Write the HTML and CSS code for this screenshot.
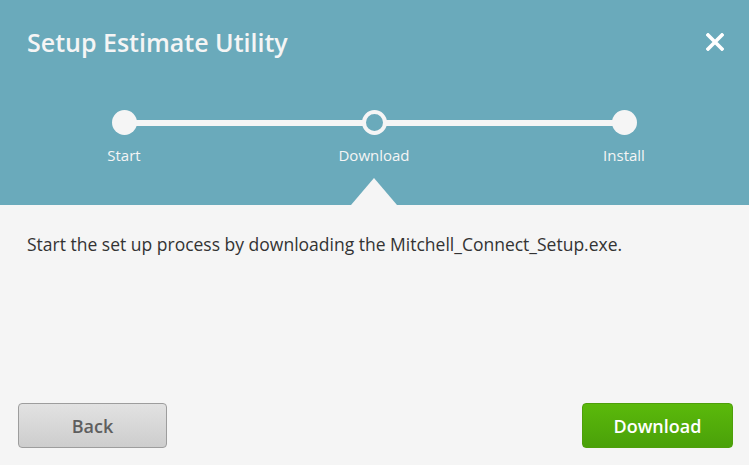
FILE: index.html
```html
<!DOCTYPE html>
<html lang="en">
<head>
  <meta charset="UTF-8" />
  <meta name="viewport" content="width=device-width, initial-scale=1.0"/>
  <title>Setup Estimate Utility</title>
  <link rel="stylesheet" href="styles.css">
</head>
<body>

  <div class="dialog">
    <div class="header">
      <div class="title-row">
        <h2>Setup Estimate Utility</h2>
        <button class="close" title="Close">
          <svg width="18" height="18" viewBox="0 0 18 18">
            <path d="M2 2 L16 16 M16 2 L2 16" stroke="#ffffff" stroke-width="3.6" stroke-linecap="square" />
          </svg>
        </button>
      </div>

      <div class="steps">
        <div class="step done">
          <span class="dot"></span>
          <span class="label">Start</span>
        </div>
        <div class="step current">
          <span class="dot"></span>
          <span class="label">Download</span>
          <span class="pointer"></span>
        </div>
        <div class="step">
          <span class="dot"></span>
          <span class="label">Install</span>
        </div>
      </div>
    </div>

    <div class="content">
      <p>Start the set up process by downloading the Mitchell_Connect_Setup.exe.</p>

      <div class="actions">
        <button class="btn back">Back</button>
        <button class="btn primary">Download</button>
      </div>
    </div>
  </div>

</body>
</html>
```

FILE: styles.css
```css
body {
  margin: 0;
  background: #ffffff;
  font-family: "Open Sans", Arial, sans-serif;
}
.dialog {
  width: 749px;
  height: 465px;
  display: flex;
  flex-direction: column;
  background: #f5f5f5;
}
.header {
  height: 205px;
  box-sizing: border-box;
  padding-top: 26px;
  background: #6aaabb;
  color: #f5f5f5;
}
.title-row {
  display: flex;
  justify-content: space-between;
  align-items: center;
  padding: 0 25px 0 27px;
}
h2 {
  margin: 0;
  font-size: 25px;
  line-height: 32px;
  font-weight: 600;
}
.close {
  border: 0;
  padding: 0;
  background: none;
  width: 18px;
  height: 18px;
  cursor: pointer;
}
.close svg {
  display: block;
}
.steps {
  display: grid;
  grid-template-columns: 250px 250px 250px;
  margin: 52px 0 0 -1px;
  background: linear-gradient(#f5f5f5, #f5f5f5) no-repeat;
  background-size: 500px 6px;
  background-position: 125px 10px;
}
.step {
  display: flex;
  flex-direction: column;
  align-items: center;
}
.dot {
  width: 25px;
  height: 25px;
  box-sizing: border-box;
  border-radius: 50%;
  background: #f5f5f5;
}
.step.current .dot {
  background: #6aaabb;
  border: 4px solid #f5f5f5;
}
.label {
  margin-top: 10px;
  font-size: 15px;
  line-height: 20px;
}
.pointer {
  margin-top: 13px;
  width: 0;
  height: 0;
  border-left: 23px solid transparent;
  border-right: 23px solid transparent;
  border-bottom: 27px solid #f5f5f5;
}
.content {
  flex: 1;
  display: flex;
  flex-direction: column;
  padding: 27px 16px 17px 18px;
}
.content p {
  margin: 0 0 0 9px;
  font-size: 17.5px;
  line-height: 24px;
  color: #333333;
}
.actions {
  margin-top: auto;
  display: flex;
  justify-content: space-between;
}
.btn {
  height: 45px;
  width: 149px;
  font-family: "Open Sans", Arial, sans-serif;
  font-size: 18px;
  font-weight: 600;
  border-radius: 4px;
  cursor: pointer;
}
.back {
  width: 149px;
  color: #5e5e5e;
  border: 1px solid #9d9d9d;
  background: linear-gradient(#e2e2e2, #cdcdcd);
}
.primary {
  width: 151px;
  color: #ffffff;
  border: 1px solid #4e9f0a;
  background: linear-gradient(#5bb90b, #4aa109);
}
```
